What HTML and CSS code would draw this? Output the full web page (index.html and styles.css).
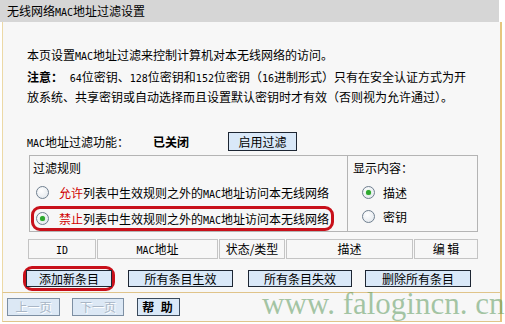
FILE: index.html
```html
<!DOCTYPE html>
<html lang="zh-CN">
<head>
<meta charset="utf-8">
<title>无线网络MAC地址过滤设置</title>
<link rel="stylesheet" href="styles.css">
</head>
<body>
<div class="title">无线网络<span class="a">MAC</span>地址过滤设置</div>
<div class="panel">
  <p class="intro">本页设置<span class="a">MAC</span>地址过滤来控制计算机对本无线网络的访问。</p>
  <p class="note"><b>注意：</b> <span class="a">64</span>位密钥、<span class="a">128</span>位密钥和<span class="a">152</span>位密钥（<span class="a">16</span>进制形式）只有在安全认证方式为开<br>放系统、共享密钥或自动选择而且设置默认密钥时才有效（否则视为允许通过）。</p>
  <div class="status">
    <span class="lbl"><span class="a">MAC</span>地址过滤功能：</span>
    <b class="state">已关闭</b>
    <button class="btn enable">启用过滤</button>
  </div>
  <div class="rules">
    <div class="rcell">
      <div class="rhead">过滤规则</div>
      <div class="opt"><span class="radio"></span><span><em>允许</em>列表中生效规则之外的<span class="a">MAC</span>地址访问本无线网络</span></div>
      <div class="opt ring"><span class="radio on"></span><span><em>禁止</em>列表中生效规则之外的<span class="a">MAC</span>地址访问本无线网络</span></div>
    </div>
    <div class="dcell">
      <div class="rhead">显示内容：</div>
      <div class="opt"><span class="radio on"></span><span>描述</span></div>
      <div class="opt"><span class="radio"></span><span>密钥</span></div>
    </div>
  </div>
  <div class="thead">
    <div class="th c1"><span class="a">ID</span></div>
    <div class="th c2"><span class="a">MAC</span>地址</div>
    <div class="th c3">状态/类型</div>
    <div class="th c4">描述</div>
    <div class="th c5">编 辑</div>
  </div>
  <div class="actions">
    <span class="mark-ring"><button class="btn add">添加新条目</button></span>
    <button class="btn all-on">所有条目生效</button>
    <button class="btn all-off">所有条目失效</button>
    <button class="btn del">删除所有条目</button>
  </div>
</div>
<div class="footer">
  <button class="btn fbtn off prev">上一页</button>
  <button class="btn fbtn off next">下一页</button>
  <button class="btn fbtn help">帮 助</button>
</div>
<div class="watermark">www. falogincn. cn</div>
</body>
</html>
```
FILE: styles.css
```css
html, body {
  margin: 0;
  padding: 0;
  background: #ffffff;
}
body {
  font-family: "Noto Sans CJK SC", "Noto Sans", sans-serif;
  font-size: 12px;
  color: #000;
  width: 505px;
  height: 324px;
  position: relative;
  overflow: hidden;
}
.a {
  font-family: "DejaVu Sans Mono", monospace;
  font-size: 10px;
  line-height: 1;
}
.title {
  height: 22px;
  width: 499px;
  background: #d6d6d6;
  line-height: 22px;
  padding-left: 7px;
  box-sizing: border-box;
}
.panel {
  margin-left: 2px;
  width: 500px;
  height: 270px;
  box-sizing: border-box;
  border-left: 1px solid #ecd9a6;
  border-right: 2px solid #e6c67e;
  background: #f7f7f7;
  padding: 23px 0 0 24px;
}
p {
  margin: 0;
}
.intro {
  line-height: 20px;
  height: 20px;
  margin-bottom: 2px;
}
.note {
  line-height: 20px;
  height: 40px;
  white-space: nowrap;
}
.note b {
  font-weight: bold;
  margin-right: 4px;
}
.status {
  margin-top: 25px;
  height: 19px;
  display: flex;
  align-items: center;
}
.lbl {
  width: 126px;
}
.state {
  width: 75px;
  font-weight: bold;
}
.btn {
  font-family: "Noto Sans CJK SC", "Noto Sans", sans-serif;
  font-size: 12px;
  color: #000;
  background: #d9e8f8;
  border: 1px solid #1d2633;
  padding: 0;
  margin: 0;
  height: 18px;
  line-height: 16px;
  box-sizing: border-box;
}
.enable {
  width: 69px;
  height: 19px;
}
.rules {
  margin-top: 4px;
  margin-left: 2px;
  width: 449px;
  height: 77px;
  box-sizing: border-box;
  border: 1px solid #b4b4b4;
  display: grid;
  grid-template-columns: 318px 1fr;
}
.rcell {
  border-right: 1px solid #b4b4b4;
  padding-left: 3px;
}
.dcell {
  padding-left: 5px;
}
.rhead {
  height: 24px;
  line-height: 24px;
}
.opt {
  height: 24px;
  display: flex;
  align-items: center;
  gap: 10px;
  padding-left: 3px;
  white-space: nowrap;
}
.dcell .opt {
  padding-left: 9px;
  gap: 8px;
}
.opt em {
  font-style: normal;
  color: #d00000;
}
.ring {
  margin-top: 2px;
  margin-left: -2px;
  width: 303px;
  height: 25px;
  box-sizing: border-box;
  border: 3px solid #c8101a;
  border-radius: 9px;
  padding-left: 2px;
}
.radio {
  width: 13px;
  height: 13px;
  box-sizing: border-box;
  border-radius: 50%;
  border: 1px solid #6f7f8f;
  background: radial-gradient(circle at 40% 35%, #ffffff 0%, #e8ecf0 70%, #d2d8de 100%);
  display: inline-flex;
  align-items: center;
  justify-content: center;
  flex: none;
}
.radio.on::after {
  content: "";
  width: 5px;
  height: 5px;
  border-radius: 50%;
  background: #2fa82f;
  box-shadow: 0 0 1px #5c5;
}
.thead {
  margin-top: 7px;
  margin-left: 1px;
  display: flex;
  height: 20px;
  width: 450px;
}
.th {
  border: 1px solid #c4c4c4;
  box-sizing: border-box;
  height: 20px;
  line-height: 18px;
  text-align: center;
}
.th + .th {
  margin-left: 1px;
}
.c1 { width: 68px; }
.c2 { width: 121px; }
.c3 { width: 66px; }
.c4 { width: 127px; }
.c5 { width: 64px; }
.actions {
  margin-top: 7px;
  margin-left: -4px;
  display: flex;
  align-items: center;
}
.mark-ring {
  display: inline-flex;
  align-items: center;
  justify-content: center;
  width: 92px;
  height: 25px;
  box-sizing: border-box;
  border: 3px solid #c8101a;
  border-radius: 9px;
}
.add {
  width: 86px;
  height: 17px;
}
.all-on {
  width: 105px;
  height: 17px;
  margin-left: 13px;
}
.all-off {
  width: 104px;
  height: 17px;
  margin-left: 15px;
}
.del {
  width: 106px;
  height: 17px;
  margin-left: 13px;
}
.footer {
  margin-left: 2px;
  width: 500px;
  height: 30px;
  box-sizing: border-box;
  border-top: 1px solid #e0c48a;
  border-bottom: 1px solid #e0c48a;
  border-left: 1px solid #ecd9a6;
  border-right: 2px solid #e6c67e;
  background: #f7f7f7;
  display: flex;
  align-items: center;
  padding-left: 4px;
}
.fbtn {
  height: 18px;
  border-color: #3a4a5c;
}
.prev { width: 53px; }
.next { width: 52px; margin-left: 12px; }
.help { width: 43px; margin-left: 13px; font-weight: bold; letter-spacing: 2px; }
.off {
  color: #a9b6c6;
  text-shadow: 1px 1px 0 #ffffff;
  background: #dce8f5;
  border-color: #7d8fa3;
}
.watermark {
  position: absolute;
  left: 262px;
  top: 287px;
  font-family: "Liberation Serif", serif;
  font-size: 31px;
  line-height: 34px;
  color: rgba(80, 145, 80, 0.5);
  white-space: nowrap;
  pointer-events: none;
}
```
